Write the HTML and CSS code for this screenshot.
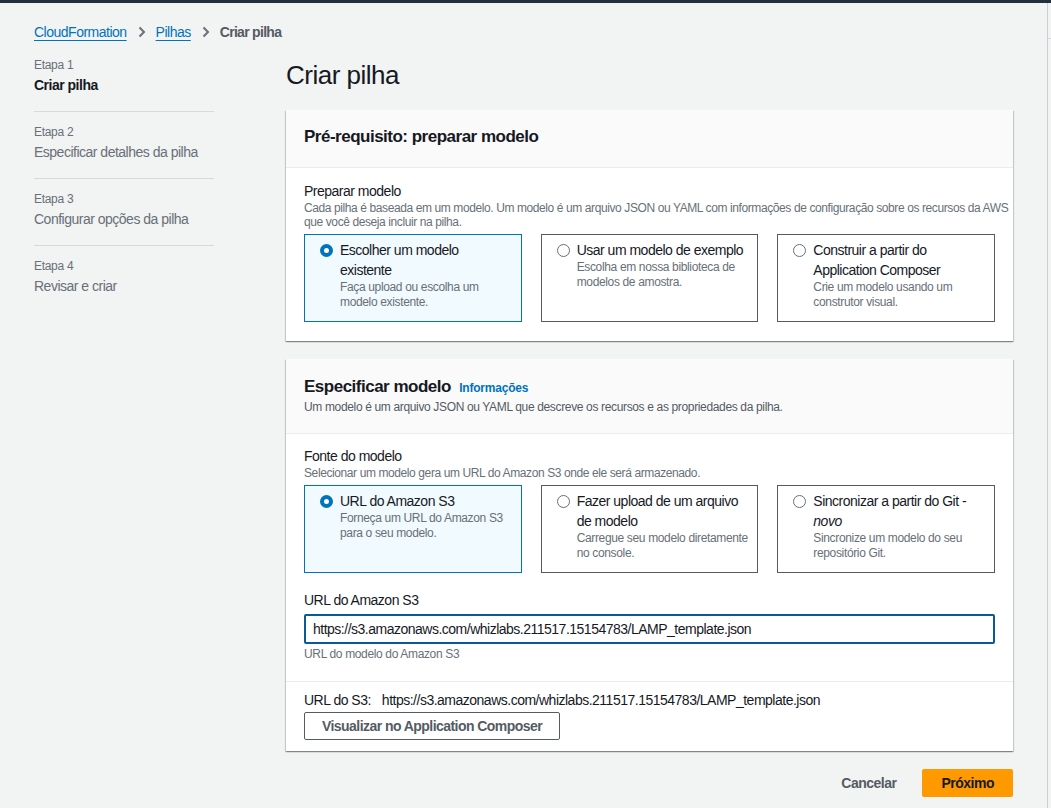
FILE: index.html
```html
<!DOCTYPE html>
<html lang="pt-BR">
<head>
<meta charset="utf-8">
<title>Criar pilha</title>
<link rel="stylesheet" href="styles.css">
</head>
<body>
<div class="topbar"></div>
<div class="app">
  <div class="main">
    <nav class="breadcrumb">
      <a class="crumb-link" href="#">CloudFormation</a>
      <svg class="chev" width="8" height="12" viewBox="0 0 8 12"><path d="M1.5 1.5 L6 6 L1.5 10.5" fill="none" stroke="#687078" stroke-width="2"/></svg>
      <a class="crumb-link" href="#">Pilhas</a>
      <svg class="chev" width="8" height="12" viewBox="0 0 8 12"><path d="M1.5 1.5 L6 6 L1.5 10.5" fill="none" stroke="#687078" stroke-width="2"/></svg>
      <span class="crumb-current">Criar pilha</span>
    </nav>
    <div class="layout">
      <aside class="steps">
        <div class="step">
          <div class="step-num">Etapa 1</div>
          <div class="step-title active">Criar pilha</div>
        </div>
        <div class="step">
          <div class="step-num">Etapa 2</div>
          <div class="step-title">Especificar detalhes da pilha</div>
        </div>
        <div class="step">
          <div class="step-num">Etapa 3</div>
          <div class="step-title">Configurar opções da pilha</div>
        </div>
        <div class="step last">
          <div class="step-num">Etapa 4</div>
          <div class="step-title">Revisar e criar</div>
        </div>
      </aside>
      <main class="content">
        <h1 class="page-title">Criar pilha</h1>

        <section class="card">
          <header class="card-header">
            <h2 class="card-title">Pré-requisito: preparar modelo</h2>
          </header>
          <div class="card-body first-body">
            <div class="field-label">Preparar modelo</div>
            <div class="field-desc nowrap">Cada pilha é baseada em um modelo. Um modelo é um arquivo JSON ou YAML com informações de configuração sobre os recursos da AWS<br>que você deseja incluir na pilha.</div>
            <div class="tiles">
              <div class="tile selected">
                <span class="radio on"></span>
                <div class="tile-text">
                  <div class="tile-label">Escolher um modelo<br>existente</div>
                  <div class="tile-desc">Faça upload ou escolha um<br>modelo existente.</div>
                </div>
              </div>
              <div class="tile">
                <span class="radio"></span>
                <div class="tile-text">
                  <div class="tile-label">Usar um modelo de exemplo</div>
                  <div class="tile-desc">Escolha em nossa biblioteca de<br>modelos de amostra.</div>
                </div>
              </div>
              <div class="tile">
                <span class="radio"></span>
                <div class="tile-text">
                  <div class="tile-label">Construir a partir do<br>Application Composer</div>
                  <div class="tile-desc">Crie um modelo usando um<br>construtor visual.</div>
                </div>
              </div>
            </div>
          </div>
        </section>

        <section class="card">
          <header class="card-header tall">
            <h2 class="card-title">Especificar modelo <a class="info-link" href="#">Informações</a></h2>
            <div class="header-desc">Um modelo é um arquivo JSON ou YAML que descreve os recursos e as propriedades da pilha.</div>
          </header>
          <div class="card-body second-body">
            <div class="field-label">Fonte do modelo</div>
            <div class="field-desc">Selecionar um modelo gera um URL do Amazon S3 onde ele será armazenado.</div>
            <div class="tiles">
              <div class="tile selected">
                <span class="radio on"></span>
                <div class="tile-text">
                  <div class="tile-label">URL do Amazon S3</div>
                  <div class="tile-desc">Forneça um URL do Amazon S3<br>para o seu modelo.</div>
                </div>
              </div>
              <div class="tile">
                <span class="radio"></span>
                <div class="tile-text">
                  <div class="tile-label">Fazer upload de um arquivo<br>de modelo</div>
                  <div class="tile-desc">Carregue seu modelo diretamente<br>no console.</div>
                </div>
              </div>
              <div class="tile">
                <span class="radio"></span>
                <div class="tile-text">
                  <div class="tile-label">Sincronizar a partir do Git -<br><em>novo</em></div>
                  <div class="tile-desc">Sincronize um modelo do seu<br>repositório Git.</div>
                </div>
              </div>
            </div>
            <div class="field-label url-label">URL do Amazon S3</div>
            <div class="input">https://s3.amazonaws.com/whizlabs.211517.15154783/LAMP_template.json</div>
            <div class="hint">URL do modelo do Amazon S3</div>
          </div>
          <div class="card-footer">
            <div class="s3-line"><span class="s3-key">URL do S3:</span>https://s3.amazonaws.com/whizlabs.211517.15154783/LAMP_template.json</div>
            <button class="btn-normal" type="button">Visualizar no Application Composer</button>
          </div>
        </section>

        <div class="actions">
          <button class="btn-link" type="button">Cancelar</button>
          <button class="btn-primary" type="button">Próximo</button>
        </div>
      </main>
    </div>
  </div>
  <div class="rail"><div class="rail-top"></div></div>
</div>
</body>
</html>
```

FILE: styles.css
```css
* { box-sizing: border-box; }
html, body { margin: 0; padding: 0; }
body {
  background: #f2f3f3;
  font-family: "Liberation Sans", Arial, sans-serif;
  font-size: 14px;
  line-height: 20px;
  color: #16191f;
  letter-spacing: -0.5px;
  width: 1051px;
  height: 808px;
  overflow: hidden;
}
.topbar { height: 3px; background: #232f3e; }
.app { display: flex; height: 805px; }
.main { width: 1047px; padding-left: 34px; }
.rail { flex: 1; border-left: 1px solid #c9cfd2; }
.rail-top { height: 36px; border-bottom: 1px solid #d5dbdb; }

.breadcrumb { display: flex; align-items: center; padding-top: 17px; height: 40px; }
.crumb-link { color: #0073bb; text-decoration: underline; text-underline-offset: 3px; text-decoration-thickness: 1px; }
.chev { margin: 0 10px 0 11px; }
.crumb-current { color: #545b64; font-weight: bold; letter-spacing: -0.7px; }

.layout { display: grid; grid-template-columns: 180px 727px; column-gap: 72px; }

.steps { padding-top: 14px; }
.step { padding: 12px 0 16px; border-bottom: 1px solid #d5dbdb; }
.step:first-child { padding-top: 0; }
.step.last { border-bottom: none; }
.step-num { font-size: 12px; line-height: 16px; color: #687078; letter-spacing: -0.3px; }
.step-title { margin-top: 2px; color: #687078; }
.step-title.active { color: #16191f; font-weight: bold; }

.page-title { margin: 15px 0 18px; font-size: 26px; line-height: 34px; font-weight: normal; letter-spacing: -0.5px; color: #16191f; }

.card {
  background: #fff;
  box-shadow: 0 1px 1px 0 rgba(0,28,36,.3), 1px 1px 1px 0 rgba(0,28,36,.15), -1px 1px 1px 0 rgba(0,28,36,.15);
  margin-bottom: 18px;
}
.card-header { background: #fafafa; border-bottom: 1px solid #eaeded; padding: 16px 18px 19px; }
.card-header.tall { padding: 17px 18px 18px; }
.card-title { margin: 0; font-size: 17px; line-height: 22px; font-weight: bold; letter-spacing: -0.5px; color: #16191f; }
.info-link { font-size: 12px; color: #0073bb; text-decoration: none; margin-left: 4px; letter-spacing: -0.2px; }
.header-desc { font-size: 12px; line-height: 16px; color: #545b64; letter-spacing: -0.35px; }

.card-body { padding: 13px 18px 19px; }
.second-body { padding-top: 12px; }
.field-label { color: #16191f; }
.field-desc { font-size: 12px; line-height: 14px; color: #687078; letter-spacing: -0.4px; }
.field-desc.nowrap { white-space: nowrap; }

.tiles { display: grid; grid-template-columns: repeat(3, 1fr); column-gap: 19px; margin-top: 5px; }
.tile { display: flex; align-items: flex-start; border: 1px solid #545b64; padding: 5px 4px 11px 15px; }
.tile.selected { border-color: #0073bb; background: #f1faff; }
.radio { flex: none; width: 13px; height: 13px; border-radius: 50%; border: 1px solid #687078; background: #fff; margin: 4px 7px 0 0; }
.radio.on { border: 4px solid #0073bb; }
.tile-label { color: #16191f; }
.tile-desc { font-size: 12px; line-height: 15px; color: #687078; letter-spacing: -0.35px; }

.url-label { margin-top: 17px; }
.input {
  margin-top: 4px;
  height: 30px;
  border: 2px solid #0a5a94;
  border-radius: 2px;
  padding: 3px 7px;
  line-height: 20px;
  color: #16191f;
}
.hint { margin-top: 2px; font-size: 12px; line-height: 16px; color: #687078; letter-spacing: -0.35px; }

.card-footer { border-top: 1px solid #eaeded; padding: 8px 18px 11px; }
.s3-key { margin-right: 11px; }
.btn-normal {
  margin-top: 2px;
  height: 28px;
  padding: 0 17px;
  border: 1px solid #545b64;
  border-radius: 2px;
  background: #fff;
  font-family: inherit;
  font-size: 14px;
  font-weight: bold;
  letter-spacing: -0.55px;
  color: #545b64;
}

.actions { display: flex; justify-content: flex-end; align-items: center; margin-top: 18px; }
.btn-link {
  background: none; border: none; padding: 4px 20px; margin-right: 6px;
  font-family: inherit; font-size: 14px; font-weight: bold; letter-spacing: -0.5px; color: #545b64;
}
.btn-primary {
  height: 28px; padding: 0 19px; background: #ff9900; border: none; border-radius: 2px;
  font-family: inherit; font-size: 14px; font-weight: bold; letter-spacing: -0.5px; color: #16191f;
}
```
